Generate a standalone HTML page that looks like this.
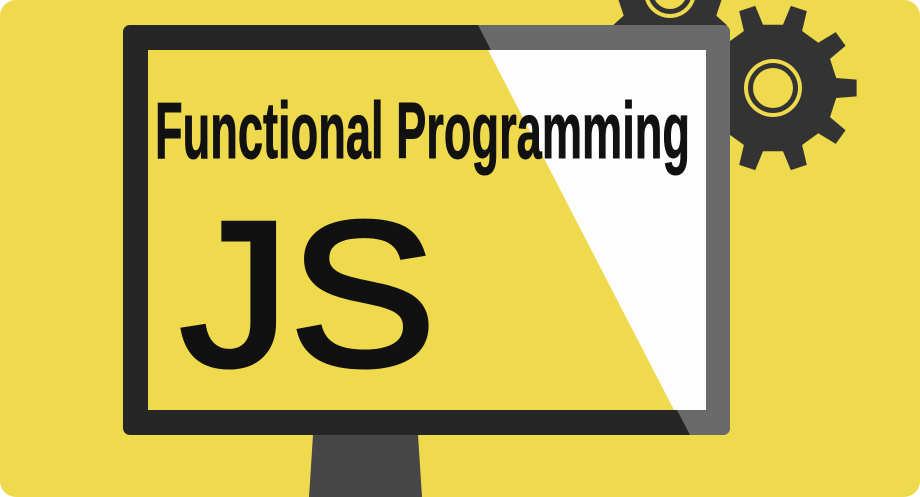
<!DOCTYPE html>
<html><head><meta charset="utf-8"><style>
html,body{margin:0;padding:0;background:#fff;width:920px;height:497px;overflow:hidden}
.card{position:absolute;left:0;top:0;width:920px;height:497px;border-radius:16px;overflow:hidden;background:#efd94d}
svg{display:block}
</style></head><body>
<div class="card">
<svg width="920" height="497" viewBox="0 0 920 497">
  <g id="gears"></g>
  <path d="M313 435 L418 435 L422 497 L309 497 Z" fill="#474747"/>
  <clipPath id="mon"><rect x="123" y="25" width="607" height="410" rx="7"/></clipPath>
  <g clip-path="url(#mon)">
    <rect x="123" y="25" width="607" height="410" fill="#262626"/>
    <path d="M478 25 L740 25 L740 435 L690 435 Z" fill="#6a6a6a"/>
  </g>
  <clipPath id="scr"><rect x="148" y="50" width="558" height="360"/></clipPath>
  <g clip-path="url(#scr)">
    <rect x="148" y="50" width="558" height="360" fill="#efd94d"/>
    <path d="M488 50 L706 50 L706 410 L674 410 Z" fill="#fdfdfd"/>
  </g>
  <text x="155" y="158" font-family="Liberation Sans, sans-serif" font-weight="bold" font-size="80" textLength="535" lengthAdjust="spacingAndGlyphs" fill="#111" stroke="#111" stroke-width="1">Functional Programming</text>
  <text x="180" y="365" font-family="Liberation Sans, sans-serif" font-size="206" textLength="256" lengthAdjust="spacingAndGlyphs" fill="#111" stroke="#111" stroke-width="5">JS</text>
</svg>
</div>
<script>
function gear(cx,cy,ro,ri,n){
  var d="";for(var i=0;i<n;i++){
    var a=i*2*Math.PI/n, s=Math.PI/n;
    var pts=[[ri,a-s*0.5],[ro,a-s*0.32],[ro,a+s*0.32],[ri,a+s*0.5],[ri,a+s*1.5]];
    pts.forEach(function(p,j){var x=cx+p[0]*Math.cos(p[1]),y=cy+p[0]*Math.sin(p[1]);d+=(i==0&&j==0?"M":"L")+x.toFixed(1)+" "+y.toFixed(1)+" ";});
  }
  return d+"Z";
}
var g=document.getElementById('gears'),ns="http://www.w3.org/2000/svg";
function add(tag,attrs){var e=document.createElementNS(ns,tag);for(var k in attrs)e.setAttribute(k,attrs[k]);g.appendChild(e);}
add('path',{d:gear(773,88,84,64,10),fill:'#333'});
add('circle',{cx:773,cy:88,r:29,fill:'#efd94d'});
add('circle',{cx:773,cy:88,r:25,fill:'#333'});
add('circle',{cx:773,cy:88,r:20,fill:'#efd94d'});
add('path',{d:gear(670,-8,66,52,10),fill:'#333'});
add('circle',{cx:670,cy:-8,r:26,fill:'#efd94d'});
add('circle',{cx:670,cy:-8,r:22,fill:'#333'});
add('circle',{cx:670,cy:-8,r:17,fill:'#efd94d'});
</script>
</body></html>
